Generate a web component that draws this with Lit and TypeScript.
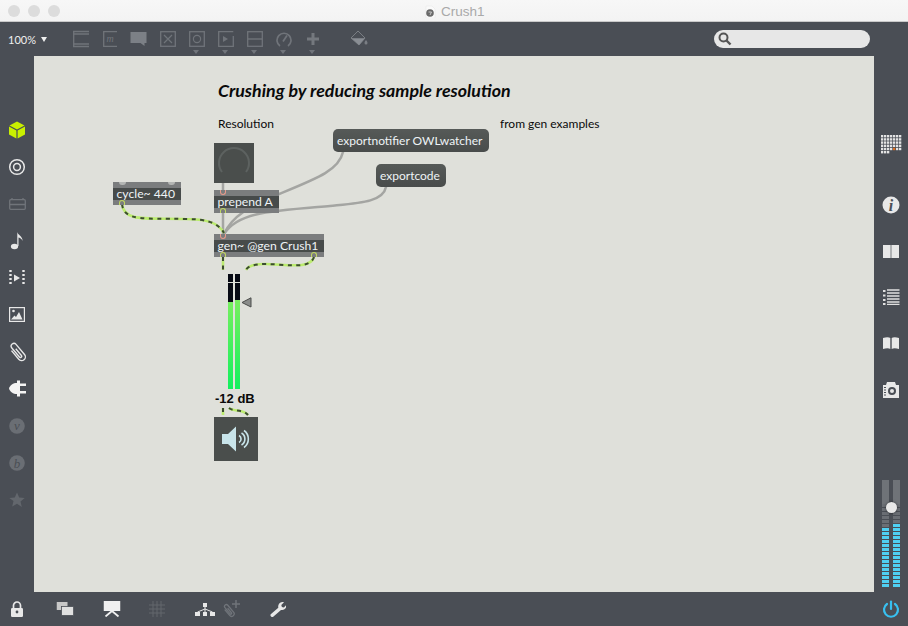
import { LitElement, html, css, svg } from "lit";
import { customElement } from "lit/decorators.js";

const ic = (w: number, h: number, body: unknown) =>
  html`<svg width=${w} height=${h} viewBox="0 0 ${w} ${h}">${body}</svg>`;

const DIM = "#70747a";
const FAINT = "#63676d";
const WHITE = "#e8e8e8";

// top toolbar
const toolIcons = [
  { caret: false, icon: ic(18, 18, svg`<g fill="none" stroke=${DIM} stroke-width="1.3"><path d="M1 1.5h16M1 16.5h16M1 4h16M1 14h16M1.7 1v16"/></g>`) },
  { caret: false, icon: ic(16, 18, svg`<path d="M15 1.7H1.7v14.6H15" fill="none" stroke=${DIM} stroke-width="1.3"/><text x="4.5" y="11.5" font-family="Liberation Serif" font-style="italic" font-size="10" fill=${DIM}>m</text>`) },
  { caret: false, icon: ic(17, 18, svg`<path d="M0.5 2h16v11h-2v3l-4-3h-10z" fill="#7c8086"/>`) },
  { caret: false, icon: ic(16, 16, svg`<rect x="0.7" y="0.7" width="14.6" height="14.6" fill="none" stroke=${DIM} stroke-width="1.3"/><path d="M4 4l8 8M12 4l-8 8" stroke=${DIM} stroke-width="1.2"/>`) },
  { caret: true, icon: ic(16, 16, svg`<rect x="0.7" y="0.7" width="14.6" height="14.6" fill="none" stroke=${DIM} stroke-width="1.3"/><circle cx="8" cy="8" r="3.6" fill="none" stroke=${DIM} stroke-width="1.2"/>`) },
  { caret: true, icon: ic(16, 16, svg`<path d="M15.3 0.7H0.7v14.6h14.6V5" fill="none" stroke=${DIM} stroke-width="1.3"/><path d="M5 5l5 3-5 3z" fill=${DIM}/>`) },
  { caret: true, icon: ic(16, 16, svg`<rect x="0.7" y="0.7" width="14.6" height="14.6" fill="none" stroke=${DIM} stroke-width="1.3"/><path d="M1 8h14" stroke=${DIM} stroke-width="1.4"/>`) },
  { caret: true, icon: ic(16, 16, svg`<path d="M4 15A7 7 0 1 1 12 15" fill="none" stroke=${DIM} stroke-width="1.7"/><path d="M7 10.5l4-6" stroke=${DIM} stroke-width="1.7"/>`) },
  { caret: true, icon: ic(12, 12, svg`<path d="M6 0v12M0 6h12" stroke="#74787e" stroke-width="3"/>`) },
];

const bucket = ic(18, 18, svg`<path d="M8 1l7 7-6 7-8-7z" fill="none" stroke="#7a7e84" stroke-width="1"/><path d="M1.5 8.2h13.3L9 15z" fill="#8a8e94"/><path d="M16 10c1.2 1.6 1.5 2.2 1.5 3a1.5 1.5 0 0 1-3 0c0-.8.3-1.4 1.5-3z" fill="#7a7e84"/>`);

const clipPath = "M5 5v9a3 3 0 0 0 6 0V3.5a2.2 2.2 0 0 0-4.4 0V13a1 1 0 0 0 2 0V6";

// left sidebar, top to bottom
const leftIcons = [
  ic(18, 18, svg`<path d="M9 .5l7.5 4L9 8.5l-7.5-4z" fill="#c9f000"/><path d="M1 5.6l7.4 4v8L1 13.6zM17 5.6l-7.4 4v8l7.4-4z" fill="#c9f000"/>`),
  ic(18, 18, svg`<circle cx="9" cy="9" r="7.3" fill="none" stroke=${WHITE} stroke-width="1.5"/><circle cx="9" cy="9" r="3.4" fill="none" stroke=${WHITE} stroke-width="1.5"/>`),
  ic(17, 14, svg`<rect x=".7" y="2.7" width="15.6" height="9.6" rx="1" fill="none" stroke=${DIM} stroke-width="1.3"/><path d="M1 7.5h15M3 1v2M14 1v2" stroke=${DIM} stroke-width="1.3"/>`),
  ic(14, 19, svg`<ellipse cx="4.5" cy="15.5" rx="3.6" ry="2.8" fill=${WHITE}/><path d="M7.3 15V1c.3 3 5.5 4 5.2 9-.5-2-3-3.2-4-3.4V15z" fill=${WHITE}/>`),
  ic(16, 16, svg`<path d="M5 4.5l6 3.5-6 3.5z" fill=${WHITE}/><path d="M1.5 0v16M14.5 0v16" stroke=${WHITE} stroke-width="2.4" stroke-dasharray="2 2"/>`),
  ic(16, 15, svg`<rect x=".6" y=".6" width="14.8" height="13.8" fill="none" stroke=${WHITE} stroke-width="1.2"/><path d="M2 12.5l3.5-4 1.5 1.5 3-5 3.5 7.5z" fill=${WHITE}/><circle cx="4.5" cy="4" r="1.3" fill=${WHITE}/>`),
  ic(20, 20, svg`<g transform="rotate(-40 10 10) translate(.4 -.8) scale(1.25)"><path d=${clipPath} fill="none" stroke=${WHITE} stroke-width="1.1"/></g>`),
  ic(17, 17, svg`<path d="M0 8.5C1 5 4 3 8 3V14C4 14 1 12 0 8.5z" fill="#f4f4f4"/><path d="M8 0.5h3v16H8zM11 3.5h6v2.5h-6zM11 11h6v2.5h-6z" fill="#f4f4f4"/>`),
  ic(16, 16, svg`<circle cx="8" cy="8" r="7.8" fill="#6a6e74"/><text x="8" y="12" text-anchor="middle" font-family="Liberation Serif" font-style="italic" font-size="13" fill="#4a4e55">v</text>`),
  ic(16, 16, svg`<circle cx="8" cy="8" r="7.8" fill="#6a6e74"/><text x="8" y="12.5" text-anchor="middle" font-family="Liberation Serif" font-style="italic" font-size="13" fill="#4a4e55">b</text>`),
  ic(16, 16, svg`<path d="M8 .5l2.2 5.1 5.5.4-4.2 3.6 1.3 5.4L8 11.7l-4.8 2.8 1.3-5.4L.3 6l5.5-.4z" fill=${FAINT}/>`),
];

// right sidebar, top to bottom: 7 x 5 cells and a short last row of 3
const gridDots = Array.from({ length: 38 }, (_, i) => ({
  x: (i % 7) * 3,
  y: Math.floor(i / 7) * 3.2,
  on: i === 32,
}));

const rightIcons = [
  ic(21, 19, svg`${gridDots.map((d) => svg`<rect x=${d.x} y=${d.y} width="2.3" height="2.4" fill=${d.on ? "#e07020" : "#e4e4e4"}/>`)}`),
  ic(18, 18, svg`<circle cx="9" cy="9" r="8.5" fill="#e8e8e8"/><text x="9" y="14.5" text-anchor="middle" font-family="Liberation Serif" font-style="italic" font-weight="bold" font-size="16" fill="#4a4e55">i</text>`),
  ic(16, 13, svg`<rect width="16" height="13" fill="#e8e8e8"/><rect x="7" width="2" height="13" fill="#b0b2b4"/>`),
  ic(17, 16, svg`<path d="M0 1h2.5v2H0zM0 5.5h2.5v2H0zM0 10h2.5v2H0zM0 14h2.5v2H0z" fill="#e0e0e0"/><path d="M4 1h12.5M4 4h12.5M4 7h12.5M4 10h12.5M4 13h12.5M4 15.5h12.5" stroke="#e0e0e0" stroke-width="1.3"/>`),
  ic(16, 12, svg`<path d="M0 1c3-1 6-1 7.3 0v11C6 11 3 11 0 12z" fill="#e8e8e8"/><path d="M16 1c-3-1-6-1-7.3 0v11c1.3-1 4.3-1 7.3 0z" fill="#e8e8e8"/>`),
  ic(16, 17, svg`<path d="M0 4h3l1-3h8l1 3h3v13H0z" fill="#e8e8e8"/><circle cx="9" cy="10" r="3" fill="none" stroke="#4a4e55" stroke-width="2"/><path d="M1 6.5h2M1 9h2M1 11.5h2M1 14h2" stroke="#4a4e55"/>`),
];

// bottom bar, x is the icon centre
const bottomIcons = [
  { x: 17, icon: ic(14, 16, svg`<path d="M3.5 7V4.5a3.5 3.5 0 0 1 7 0V7" fill="none" stroke=${WHITE} stroke-width="1.7"/><rect x="1" y="7" width="12" height="9" rx="1.2" fill=${WHITE}/><circle cx="7" cy="11" r="1.4" fill="#4a4e55"/>`) },
  { x: 65, icon: ic(17, 14, svg`<rect x="0" y="0" width="11" height="8" fill="#c8c8c8"/><rect x="5" y="4.5" width="12" height="9" fill="#e0e0e0" stroke="#4a4e55" stroke-width=".8"/>`) },
  { x: 111.5, icon: ic(17, 16, svg`<rect x="0" y="0" width="17" height="10" fill="#f0f0f0"/><path d="M8.5 10L2 15.5M8.5 10L15 15.5" stroke="#f0f0f0" stroke-width="1.8"/>`) },
  { x: 157, icon: ic(16, 16, svg`<path d="M4 0v16M8 0v16M12 0v16M0 4h16M0 8h16M0 12h16" stroke=${FAINT} stroke-width="1"/>`) },
  { x: 205, icon: ic(20, 13, svg`<rect x="8" y="0" width="4" height="4" fill=${WHITE}/><rect x="0" y="9" width="5" height="4" fill=${WHITE}/><rect x="8" y="9" width="4" height="4" fill=${WHITE}/><rect x="15" y="9" width="5" height="4" fill=${WHITE}/><path d="M10 4v5M10 6L2.5 9M10 6l7.5 3" stroke=${WHITE}/>`) },
  { x: 232, icon: ic(18, 18, svg`<g transform="rotate(-40 7 10) translate(-1 2) scale(.85)"><path d=${clipPath} fill="none" stroke=${DIM} stroke-width="1.5"/></g><path d="M13 0v8M9 4h8" stroke=${DIM} stroke-width="1.5"/>`) },
  { x: 278, icon: ic(16, 16, svg`<path d="M1 15.5c-.8-.8-.8-1.6 0-2.4l7.3-6.4c-.6-2.6.9-5.500 4-5.700.7 0 1.200.1 1.700.3l-2.700 2.600.6 2 2 .6 2.500-2.600c.5 3.100-2.300 5.900-5.400 5L3.500 15.500c-.8.8-1.700.8-2.500 0z" fill=${WHITE}/>`) },
  { x: 891, icon: ic(18, 18, svg`<path d="M5 4a7 7 0 1 0 8 0" fill="none" stroke="#38c0f0" stroke-width="2.2" stroke-linecap="round"/><path d="M9 1.5v7.5" stroke="#38c0f0" stroke-width="2.2" stroke-linecap="round"/>`) },
];

// patcher objects, coordinates are page pixels minus the canvas origin (34,56)
const OX = 34;
const OY = 56;

interface Box {
  label: string;
  x: number;
  y: number;
  w: number;
  inlets: number[];
  outlets: number[];
  topDots?: number[];
}

const boxes: Box[] = [
  { label: "cycle~ 440", x: 113, y: 182, w: 68, inlets: [], outlets: [122], topDots: [122, 171] },
  { label: "prepend A", x: 214, y: 190, w: 65, inlets: [223], outlets: [223] },
  { label: "gen~ @gen Crush1", x: 214, y: 234, w: 110, inlets: [223], outlets: [223, 314] },
];

const messages = [
  { label: "exportnotifier OWLwatcher", x: 333, y: 129, w: 156 },
  { label: "exportcode", x: 376, y: 164, w: 70 },
];

const labels = [
  { text: "Resolution", x: 218, y: 116 },
  { text: "from gen examples", x: 500, y: 116 },
];

const grayCords = [
  "M223 183V190",
  "M223 213V234",
  "M343 152C339 170 318 178 279 194C250 206 232 216 224 234",
  "M386 187C383 202 360 203 330 206C270 211 238 212 224 234",
];

const signalCords = [
  "M122 204C124 222 145 218 185 219C205 219 218 222 224 233",
  "M223 257V270",
  "M314 257C310 270 285 264 265 264C255 264 248 266 246 270",
  "M223 408V415",
  "M229 408C234 412 243 409 248 415",
];

const levelSegs = Array.from({ length: 21 }, (_, i) => i);

@customElement("app-root")
export class AppRoot extends LitElement {
  static styles = css`
    :host {
      display: block;
      width: 908px;
      height: 626px;
      font-family: "Lato", "Liberation Sans", sans-serif;
      background: #4a4e55;
      overflow: hidden;
    }
    svg {
      display: block;
    }
    .titlebar {
      height: 21px;
      background: linear-gradient(#f7f7f7, #f3f3f3);
      border-bottom: 1px solid #c9c9c9;
      display: flex;
      align-items: center;
      position: relative;
    }
    .lights {
      display: flex;
      gap: 8px;
      padding-left: 8px;
    }
    .lights span {
      width: 12px;
      height: 12px;
      border-radius: 50%;
      background: #dcdcdc;
    }
    .doc {
      position: absolute;
      left: 425px;
      top: 4px;
      display: flex;
      align-items: center;
      gap: 5px;
      font-family: "Liberation Sans", sans-serif;
      font-size: 13.5px;
      color: #a9a9a9;
    }
    .toolbar {
      height: 34px;
      display: flex;
      align-items: center;
      position: relative;
    }
    .zoom {
      width: 66px;
      box-sizing: border-box;
      padding-left: 8px;
      color: #f0f0f0;
      font-size: 11px;
      display: flex;
      align-items: center;
      gap: 5px;
    }
    .zoom i {
      border: 3.5px solid transparent;
      border-top: 5px solid #f0f0f0;
      border-bottom: 0;
    }
    .tool {
      width: 29px;
      height: 34px;
      display: flex;
      align-items: center;
      justify-content: center;
      position: relative;
    }
    .tool.caret::after {
      content: "";
      position: absolute;
      bottom: 2px;
      left: 11px;
      border: 3.5px solid transparent;
      border-top: 4px solid #70747a;
      border-bottom: 0;
    }
    .bucket {
      margin-left: 17px;
    }
    .search {
      margin-left: auto;
      margin-right: 38px;
      width: 156px;
      height: 18px;
      border-radius: 9px;
      background: #e7e7e7;
      display: flex;
      align-items: center;
      padding-left: 4px;
      box-sizing: border-box;
    }
    .middle {
      display: flex;
      height: 536px;
    }
    .side {
      width: 34px;
      flex: none;
      display: flex;
      flex-direction: column;
      align-items: center;
      box-sizing: border-box;
    }
    .side.left {
      padding-top: 55px;
    }
    .side.left > div {
      height: 37px;
      display: flex;
      align-items: center;
      justify-content: center;
    }
    .side.right {
      padding-top: 65px;
    }
    .side.right > .cell {
      height: 46px;
      flex: none;
      display: flex;
      align-items: center;
      justify-content: center;
    }
    .side.right > .cell.first {
      margin-bottom: 15px;
    }
    .canvas {
      flex: 1;
      background: #dfe0da;
      position: relative;
    }
    .canvas svg.cords {
      position: absolute;
      inset: 0;
      pointer-events: none;
    }
    .title {
      position: absolute;
      left: 184px;
      top: 23px;
      font-size: 17.8px;
      font-weight: 700;
      font-style: italic;
      color: #0a0a0a;
      white-space: nowrap;
    }
    .label {
      position: absolute;
      font-size: 12px;
      line-height: 16px;
      color: #0a0a0a;
      white-space: nowrap;
    }
    .box {
      position: absolute;
      height: 23px;
      box-sizing: border-box;
      background: #474b4a;
      border-top: 6px solid #7b7d7e;
      border-bottom: 5px solid #7b7d7e;
      color: #eef3f6;
      font-size: 12.2px;
      line-height: 12px;
      padding-left: 3.5px;
      white-space: nowrap;
    }
    .msg {
      position: absolute;
      height: 23px;
      box-sizing: border-box;
      background: linear-gradient(#565a58, #494c4b);
      border-radius: 5px;
      color: #eef3f6;
      font-size: 12px;
      line-height: 23px;
      padding-left: 4px;
      white-space: nowrap;
    }
    .port {
      position: absolute;
      width: 6px;
      height: 5px;
      box-sizing: border-box;
    }
    .port.in {
      border: 1px solid #e89a8c;
      border-top: 0;
      border-radius: 0 0 4px 4px;
    }
    .port.out {
      border: 1px solid #c0d860;
      border-bottom: 0;
      border-radius: 4px 4px 0 0;
    }
    .dot {
      position: absolute;
      width: 7px;
      height: 3px;
      background: #b4b6b4;
      border-radius: 0 0 4px 4px;
    }
    .dial {
      position: absolute;
      left: 180px;
      top: 87px;
      width: 40px;
      height: 40px;
      background: #4a4e4c;
    }
    .meter {
      position: absolute;
      left: 194px;
      top: 218px;
      display: flex;
      gap: 2px;
      height: 115px;
    }
    .meter .col {
      width: 5px;
      background: linear-gradient(#98ee60, #12f05e);
      position: relative;
    }
    .meter .col b {
      position: absolute;
      left: 0;
      right: 0;
      top: 0;
      background: #070a14;
    }
    .meter .col u {
      position: absolute;
      left: 0;
      right: 0;
      top: 8px;
      height: 1px;
      background: #dfe0da;
    }
    .peak {
      position: absolute;
      left: 207px;
      top: 241px;
    }
    .db {
      position: absolute;
      left: 181px;
      top: 335px;
      font-family: "Liberation Sans", sans-serif;
      font-size: 13px;
      line-height: 16px;
      font-weight: 700;
      color: #0a0a0a;
      white-space: nowrap;
    }
    .speaker {
      position: absolute;
      left: 180px;
      top: 361px;
      width: 44px;
      height: 44px;
      background: #4a4e4c;
      display: flex;
      align-items: center;
      justify-content: center;
    }
    .level {
      margin-top: auto;
      margin-bottom: 4px;
      position: relative;
      width: 18px;
      height: 108px;
      display: flex;
      gap: 4px;
    }
    .level .c {
      width: 7px;
      display: flex;
      flex-direction: column;
    }
    .level .top {
      height: 24px;
      flex: none;
      background: #6f7378;
    }
    .level .seg {
      height: 3px;
      flex: none;
      margin-bottom: 1px;
      background: #6a6e74;
    }
    .level .seg.on {
      background: #4fd0f2;
    }
    .knob {
      position: absolute;
      left: 3.5px;
      top: 22px;
      width: 11px;
      height: 11px;
      border-radius: 50%;
      background: #e8e8e8;
      box-shadow: 0 0 3px rgba(0, 0, 0, 0.5);
    }
    .bottom {
      height: 34px;
      position: relative;
    }
    .bottom div {
      position: absolute;
      top: 0;
      height: 34px;
      display: flex;
      align-items: center;
      transform: translateX(-50%);
    }
  `;

  render() {
    return html`
      <div class="titlebar">
        <div class="lights"><span></span><span></span><span></span></div>
        <div class="doc">
          ${ic(11, 13, svg`<path d="M1 1h6l3 3v9H1z" fill="#fafafa" stroke="#e4e4e4" stroke-width=".5"/><circle cx="5" cy="8" r="3.8" fill="#6a6a6a"/><path d="M3.5 7h3l-1.5 3" fill="none" stroke="#ddd" stroke-width=".8"/>`)}
          <span>Crush1</span>
        </div>
      </div>
      <div class="toolbar">
        <div class="zoom">100%<i></i></div>
        ${toolIcons.map((t) => html`<div class="tool ${t.caret ? "caret" : ""}">${t.icon}</div>`)}
        <div class="tool bucket">${bucket}</div>
        <div class="search">
          ${ic(14, 14, svg`<circle cx="5.5" cy="5.5" r="4" fill="none" stroke="#555" stroke-width="2"/><path d="M8.5 8.5l4 4" stroke="#555" stroke-width="2.4"/>`)}
        </div>
      </div>
      <div class="middle">
        <div class="side left">${leftIcons.map((i) => html`<div>${i}</div>`)}</div>
        <div class="canvas">
          <svg class="cords" width="840" height="536" viewBox="${OX} ${OY} 840 536">
            ${grayCords.map(
              (d) => svg`<path d=${d} fill="none" stroke="#a4a5a2" stroke-width="2.5" stroke-linecap="round"/>`
            )}
            ${signalCords.map(
              (d) => svg`
                <path d=${d} fill="none" stroke="#bcec70" stroke-width="2.6"/>
                <path d=${d} fill="none" stroke="#3c4c30" stroke-width="2" stroke-dasharray="4 4.5"/>
              `
            )}
          </svg>
          <div class="title">Crushing by reducing sample resolution</div>
          ${labels.map(
            (l) => html`<div class="label" style="left:${l.x - OX}px;top:${l.y - OY}px">${l.text}</div>`
          )}
          <div class="dial">
            ${ic(40, 40, svg`<path d="M8 29A15 15 0 1 1 32 29" fill="none" stroke="#5d6260" stroke-width="2"/>`)}
          </div>
          ${boxes.map(
            (b) => html`
              <div class="box" style="left:${b.x - OX}px;top:${b.y - OY}px;width:${b.w}px">${b.label}</div>
              ${b.inlets.map(
                (p) => html`<span class="port in" style="left:${p - 3 - OX}px;top:${b.y - OY}px"></span>`
              )}
              ${b.outlets.map(
                (p) => html`<span class="port out" style="left:${p - 3 - OX}px;top:${b.y + 18 - OY}px"></span>`
              )}
              ${(b.topDots ?? []).map(
                (p) => html`<span class="dot" style="left:${p - 3 - OX}px;top:${b.y - OY}px"></span>`
              )}
            `
          )}
          ${messages.map(
            (m) => html`<div class="msg" style="left:${m.x - OX}px;top:${m.y - OY}px;width:${m.w}px">${m.label}</div>`
          )}
          <div class="meter">
            <div class="col"><b style="height:28px"></b><u></u></div>
            <div class="col"><b style="height:26px"></b><u></u></div>
          </div>
          <div class="peak">
            ${ic(11, 11, svg`<path d="M10 .8V10L1 5.5z" fill="#8a8c8a" stroke="#4a4c4a" stroke-width="1"/>`)}
          </div>
          <div class="db">-12 dB</div>
          <div class="speaker">
            ${ic(28, 26, svg`<path d="M0 8h6l8-7.5v25L6 18H0z" fill="#c8e4ea"/><path d="M16 9.5a4 4 0 0 1 0 7M18.5 7a7 7 0 0 1 0 12M21 4.5a10.5 10.5 0 0 1 0 17" transform="translate(1 0)" fill="none" stroke="#c8e4ea" stroke-width="1.6"/>`)}
          </div>
        </div>
        <div class="side right">
          ${rightIcons.map((i, n) => html`<div class="cell ${n === 0 ? "first" : ""}">${i}</div>`)}
          <div class="level">
            ${[0, 1].map(
              (c) => html`<div class="c">
                <div class="top"></div>
                ${levelSegs.map((s) => html`<div class="seg ${s >= (c === 0 ? 6 : 5) ? "on" : ""}"></div>`)}
              </div>`
            )}
            <span class="knob"></span>
          </div>
        </div>
      </div>
      <div class="bottom">
        ${bottomIcons.map((b) => html`<div style="left:${b.x}px">${b.icon}</div>`)}
      </div>
    `;
  }
}
